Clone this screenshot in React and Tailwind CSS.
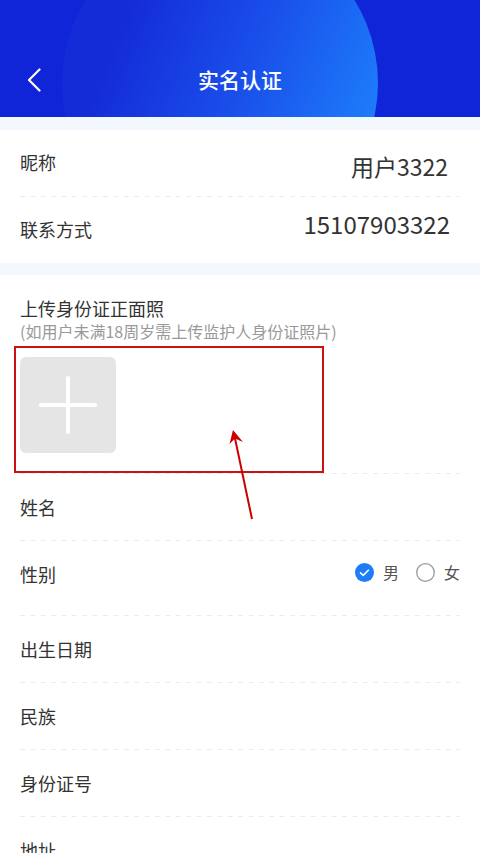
import React, { useState } from "react";

const font = { fontFamily: '"Noto Sans CJK SC", "Noto Sans", sans-serif' };

const Divider = () => (
  <div className="h-px bg-[linear-gradient(to_right,#ebebeb_50%,transparent_50%)] bg-[length:10.4px_1px]" />
);

const FieldRow = ({ label, tall, children }) => (
  <div className={`flex items-center justify-between ${tall ? "h-[74px] pb-[8px]" : "h-[66px]"}`}>
    <span className="text-[18px] leading-none text-[#333]">{label}</span>
    {children}
  </div>
);

const Radio = ({ checked, label, onClick }) => (
  <button onClick={onClick} className="flex items-center gap-[9px]">
    {checked ? (
      <svg width="19" height="19" viewBox="0 0 19 19">
        <circle cx="9.5" cy="9.5" r="9.5" fill="#1e7df6" />
        <path d="M5.5 9.8l2.7 2.6 5.2-5.2" fill="none" stroke="#fff" strokeWidth="1.6" strokeLinecap="round" strokeLinejoin="round" />
      </svg>
    ) : (
      <svg width="19" height="19" viewBox="0 0 19 19">
        <circle cx="9.5" cy="9.5" r="8.8" fill="none" stroke="#9a9a9a" strokeWidth="1.3" />
      </svg>
    )}
    <span className="text-[16px] leading-none text-[#555]">{label}</span>
  </button>
);

export default function App() {
  const [gender, setGender] = useState("male");

  return (
    <div className="relative min-h-[853px] w-[480px] overflow-hidden bg-white" style={font}>
      {/* Header */}
      <div className="relative h-[117px] overflow-hidden bg-[#0f25d7]">
        <div className="absolute left-[62px] top-[-75px] h-[316px] w-[316px] rounded-full bg-[linear-gradient(112deg,#142bd8_22%,#1a4fea_55%,#1d82fc_92%)]" />
        <div className="relative flex h-full items-center px-[27px] pt-[42px]">
          <button className="flex h-[40px] w-[24px] items-center">
            <svg width="14" height="24" viewBox="0 0 14 24">
              <path d="M12.5 1.5L2 12l10.5 10.5" fill="none" stroke="#fff" strokeWidth="2.2" strokeLinecap="round" strokeLinejoin="round" />
            </svg>
          </button>
          <h1 className="flex-1 pr-[24px] text-center text-[21px] font-medium leading-none text-white">实名认证</h1>
        </div>
      </div>
      <div className="h-[13px] bg-[#f3f7fe]" />

      {/* Account info */}
      <div className="px-[20px]">
        <div className="flex h-[66px] items-center justify-between">
          <span className="pb-[2px] text-[18px] leading-none text-[#333]">昵称</span>
          <span className="pr-[12px] pt-[6px] text-[23px] leading-none text-[#333]">用户3322</span>
        </div>
        <Divider />
        <div className="flex h-[66px] items-center justify-between">
          <span className="pb-[3px] text-[18px] leading-none text-[#333]">联系方式</span>
          <span className="pb-[12px] pr-[10px] text-[24px] leading-none text-[#333]">15107903322</span>
        </div>
      </div>
      <div className="h-[12px] bg-[#f3f7fe]" />

      {/* Upload */}
      <div className="relative px-[20px]">
        <div className="flex h-[198px] flex-col pt-[24px]">
          <span className="text-[18px] leading-none text-[#333]">上传身份证正面照</span>
          <span className="mt-[5px] text-[16px] leading-[18px] text-[#999]">(如用户未满18周岁需上传监护人身份证照片)</span>
          <button className="mt-[17px] flex h-[96px] w-[96px] items-center justify-center rounded-[6px] bg-[#e4e5e4]">
            <svg width="58" height="58" viewBox="0 0 58 58">
              <path d="M29 2v54M2 29h54" stroke="#fff" strokeWidth="4" strokeLinecap="round" />
            </svg>
          </button>
        </div>
        <Divider />
        <div className="pointer-events-none absolute left-[14px] top-[71px] h-[127px] w-[310px] border-2 border-[#cc1111]" />
      </div>

      {/* Personal info */}
      <div className="relative px-[20px]">
        <FieldRow label="姓名" />
        <Divider />
        <FieldRow label="性别" tall>
          <div className="flex items-center gap-[17px] pb-[4px]">
            <Radio checked={gender === "male"} label="男" onClick={() => setGender("male")} />
            <Radio checked={gender === "female"} label="女" onClick={() => setGender("female")} />
          </div>
        </FieldRow>
        <Divider />
        <FieldRow label="出生日期" />
        <Divider />
        <FieldRow label="民族" />
        <Divider />
        <FieldRow label="身份证号" />
        <Divider />
        <FieldRow label="地址" />
      </div>

      {/* Annotation arrow */}
      <svg className="pointer-events-none absolute left-0 top-0" width="480" height="853" viewBox="0 0 480 853">
        <path d="M252 519L234.5 436" stroke="#c00" strokeWidth="2" fill="none" />
        <path d="M233 430L229.5 444L235 438.5L243 442Z" fill="#c00" />
      </svg>
    </div>
  );
}
